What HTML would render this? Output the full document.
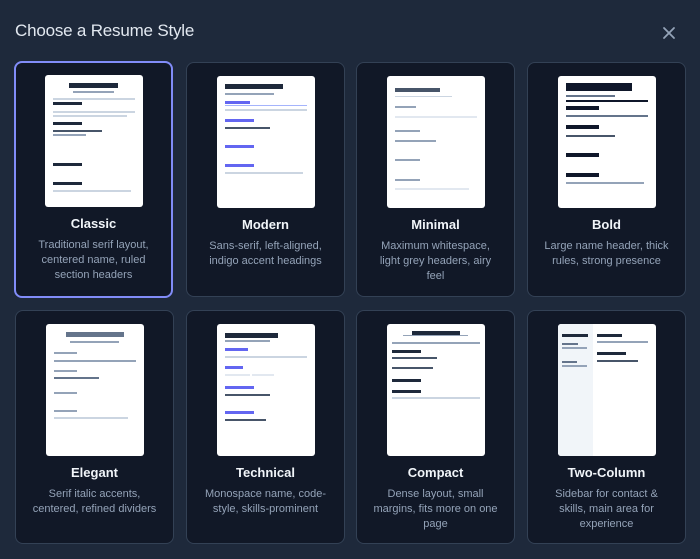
<!DOCTYPE html>
<html><head><meta charset="utf-8"><style>
*{box-sizing:border-box;margin:0;padding:0}
body{width:700px;height:559px;background:#1e293b;font-family:"Liberation Sans",sans-serif;position:relative;overflow:hidden}
h1{position:absolute;left:15px;top:21px;font-size:17px;font-weight:400;color:#e2e8f0;letter-spacing:-0.2px}
.x{position:absolute;left:662px;top:26px}
.card{position:absolute;width:159px;background:#111827;border:1px solid #334155;border-radius:8px}
.card.sel{border:2px solid #818cf8}
.th{position:absolute;left:30px;top:13px;width:98px;height:132px;background:#fff;border-radius:3px;overflow:hidden}
.sel .th{left:29px;top:12px}
.th i{position:absolute;display:block}
.t{position:absolute;left:0;right:0;top:154px;text-align:center;color:#f1f5f9;font-weight:700;font-size:13px}
.sel .t{top:153px}
.d{position:absolute;left:0;right:0;top:176px;text-align:center;color:#94a3b8;font-size:11px;line-height:15px;white-space:nowrap}
.sel .d{top:175px}
</style></head><body>
<h1>Choose a Resume Style</h1>
<svg class="x" width="14" height="14" viewBox="0 0 14 14"><path d="M2 2L12 12M12 2L2 12" stroke="#94a3b8" stroke-width="1.8" stroke-linecap="round"/></svg>

<div class="card sel" style="left:14px;top:61px;height:237px">
<div class="th">
<i style="left:24px;top:8px;width:49px;height:5px;background:#1e293b"></i>
<i style="left:28px;top:16px;width:41px;height:2px;background:#94a3b8"></i>
<i style="left:8px;top:23px;width:82px;height:1.5px;background:#cbd5e1"></i>
<i style="left:8px;top:27px;width:29px;height:3px;background:#1e293b"></i>
<i style="left:8px;top:36px;width:82px;height:2px;background:#cbd5e1"></i>
<i style="left:8px;top:40px;width:74px;height:2px;background:#cbd5e1"></i>
<i style="left:8px;top:47px;width:29px;height:3px;background:#1e293b"></i>
<i style="left:8px;top:55px;width:49px;height:2px;background:#475569"></i>
<i style="left:8px;top:59px;width:33px;height:2px;background:#94a3b8"></i>
<i style="left:8px;top:88px;width:29px;height:3px;background:#1e293b"></i>
<i style="left:8px;top:107px;width:29px;height:3px;background:#1e293b"></i>
<i style="left:8px;top:115px;width:78px;height:2px;background:#cbd5e1"></i>
</div>
<div class="t">Classic</div>
<div class="d">Traditional serif layout,<br>centered name, ruled<br>section headers</div>
</div>

<div class="card" style="left:186px;top:62px;height:235px">
<div class="th">
<i style="left:8px;top:8px;width:58px;height:5px;background:#1e293b"></i>
<i style="left:8px;top:17px;width:49px;height:2px;background:#94a3b8"></i>
<i style="left:8px;top:25px;width:25px;height:3px;background:#6366f1"></i>
<i style="left:8px;top:29px;width:82px;height:1px;background:#a5b4fc"></i>
<i style="left:8px;top:33px;width:82px;height:1.5px;background:#cbd5e1"></i>
<i style="left:8px;top:43px;width:29px;height:3px;background:#6366f1"></i>
<i style="left:8px;top:51px;width:45px;height:2px;background:#475569"></i>
<i style="left:8px;top:69px;width:29px;height:3px;background:#6366f1"></i>
<i style="left:8px;top:88px;width:29px;height:3px;background:#6366f1"></i>
<i style="left:8px;top:96px;width:78px;height:2px;background:#cbd5e1"></i>
</div>
<div class="t">Modern</div>
<div class="d">Sans-serif, left-aligned,<br>indigo accent headings</div>
</div>

<div class="card" style="left:356px;top:62px;height:235px">
<div class="th">
<i style="left:8px;top:12px;width:45px;height:4px;background:#475569"></i>
<i style="left:8px;top:20px;width:57px;height:1px;background:#cbd5e1"></i>
<i style="left:8px;top:30px;width:21px;height:2px;background:#94a3b8"></i>
<i style="left:8px;top:40px;width:82px;height:1.5px;background:#e2e8f0"></i>
<i style="left:8px;top:54px;width:25px;height:2px;background:#94a3b8"></i>
<i style="left:8px;top:64px;width:41px;height:2px;background:#94a3b8"></i>
<i style="left:8px;top:83px;width:25px;height:2px;background:#94a3b8"></i>
<i style="left:8px;top:103px;width:25px;height:2px;background:#94a3b8"></i>
<i style="left:8px;top:112px;width:74px;height:1.5px;background:#e2e8f0"></i>
</div>
<div class="t">Minimal</div>
<div class="d">Maximum whitespace,<br>light grey headers, airy<br>feel</div>
</div>

<div class="card" style="left:527px;top:62px;height:235px">
<div class="th">
<i style="left:8px;top:7px;width:66px;height:8px;background:#0f172a"></i>
<i style="left:8px;top:19px;width:49px;height:2px;background:#64748b"></i>
<i style="left:8px;top:24px;width:82px;height:1.5px;background:#0f172a"></i>
<i style="left:8px;top:30px;width:33px;height:4px;background:#0f172a"></i>
<i style="left:8px;top:39px;width:82px;height:2px;background:#64748b"></i>
<i style="left:8px;top:49px;width:33px;height:4px;background:#0f172a"></i>
<i style="left:8px;top:59px;width:49px;height:2px;background:#475569"></i>
<i style="left:8px;top:77px;width:33px;height:4px;background:#0f172a"></i>
<i style="left:8px;top:97px;width:33px;height:4px;background:#0f172a"></i>
<i style="left:8px;top:106px;width:78px;height:2px;background:#94a3b8"></i>
</div>
<div class="t">Bold</div>
<div class="d">Large name header, thick<br>rules, strong presence</div>
</div>

<div class="card" style="left:15px;top:310px;height:234px">
<div class="th">
<i style="left:20px;top:8px;width:58px;height:5px;background:#64748b"></i>
<i style="left:24px;top:17px;width:49px;height:2px;background:#94a3b8"></i>
<i style="left:8px;top:28px;width:23px;height:2px;background:#94a3b8"></i>
<i style="left:8px;top:36px;width:82px;height:2px;background:#94a3b8"></i>
<i style="left:8px;top:46px;width:23px;height:2px;background:#94a3b8"></i>
<i style="left:8px;top:53px;width:45px;height:2px;background:#64748b"></i>
<i style="left:8px;top:68px;width:23px;height:2px;background:#94a3b8"></i>
<i style="left:8px;top:86px;width:23px;height:2px;background:#94a3b8"></i>
<i style="left:8px;top:93px;width:74px;height:2px;background:#cbd5e1"></i>
</div>
<div class="t">Elegant</div>
<div class="d">Serif italic accents,<br>centered, refined dividers</div>
</div>

<div class="card" style="left:186px;top:310px;height:234px">
<div class="th">
<i style="left:8px;top:9px;width:53px;height:5px;background:#1e293b"></i>
<i style="left:8px;top:16px;width:45px;height:2px;background:#94a3b8"></i>
<i style="left:8px;top:24px;width:23px;height:3px;background:#6366f1"></i>
<i style="left:8px;top:32px;width:82px;height:2px;background:#cbd5e1"></i>
<i style="left:8px;top:42px;width:18px;height:3px;background:#6366f1"></i>
<i style="left:8px;top:50px;width:25px;height:2px;background:#e2e8f0"></i>
<i style="left:35px;top:50px;width:22px;height:2px;background:#e2e8f0"></i>
<i style="left:8px;top:62px;width:29px;height:3px;background:#6366f1"></i>
<i style="left:8px;top:70px;width:45px;height:2px;background:#475569"></i>
<i style="left:8px;top:87px;width:29px;height:3px;background:#6366f1"></i>
<i style="left:8px;top:95px;width:41px;height:2px;background:#475569"></i>
</div>
<div class="t">Technical</div>
<div class="d">Monospace name, code-<br>style, skills-prominent</div>
</div>

<div class="card" style="left:356px;top:310px;height:234px">
<div class="th">
<i style="left:25px;top:7px;width:48px;height:4px;background:#1e293b"></i>
<i style="left:16px;top:11px;width:65px;height:1px;background:#94a3b8"></i>
<i style="left:5px;top:18px;width:88px;height:2px;background:#94a3b8"></i>
<i style="left:5px;top:26px;width:29px;height:3px;background:#1e293b"></i>
<i style="left:5px;top:33px;width:45px;height:2px;background:#475569"></i>
<i style="left:5px;top:43px;width:41px;height:2px;background:#475569"></i>
<i style="left:5px;top:55px;width:29px;height:3px;background:#1e293b"></i>
<i style="left:5px;top:66px;width:29px;height:3px;background:#1e293b"></i>
<i style="left:5px;top:73px;width:88px;height:2px;background:#cbd5e1"></i>
</div>
<div class="t">Compact</div>
<div class="d">Dense layout, small<br>margins, fits more on one<br>page</div>
</div>

<div class="card" style="left:527px;top:310px;height:234px">
<div class="th">
<i style="left:0;top:0;width:35px;height:132px;background:#f1f5f9"></i>
<i style="left:4px;top:10px;width:26px;height:3px;background:#1e293b"></i>
<i style="left:4px;top:19px;width:16px;height:2px;background:#64748b"></i>
<i style="left:4px;top:23px;width:25px;height:1.5px;background:#94a3b8"></i>
<i style="left:4px;top:37px;width:15px;height:2px;background:#64748b"></i>
<i style="left:4px;top:41px;width:25px;height:1.5px;background:#94a3b8"></i>
<i style="left:39px;top:10px;width:25px;height:3px;background:#1e293b"></i>
<i style="left:39px;top:17px;width:51px;height:1.5px;background:#94a3b8"></i>
<i style="left:39px;top:28px;width:29px;height:3px;background:#1e293b"></i>
<i style="left:39px;top:36px;width:41px;height:2px;background:#475569"></i>
</div>
<div class="t">Two-Column</div>
<div class="d">Sidebar for contact &amp;<br>skills, main area for<br>experience</div>
</div>
</body></html>
